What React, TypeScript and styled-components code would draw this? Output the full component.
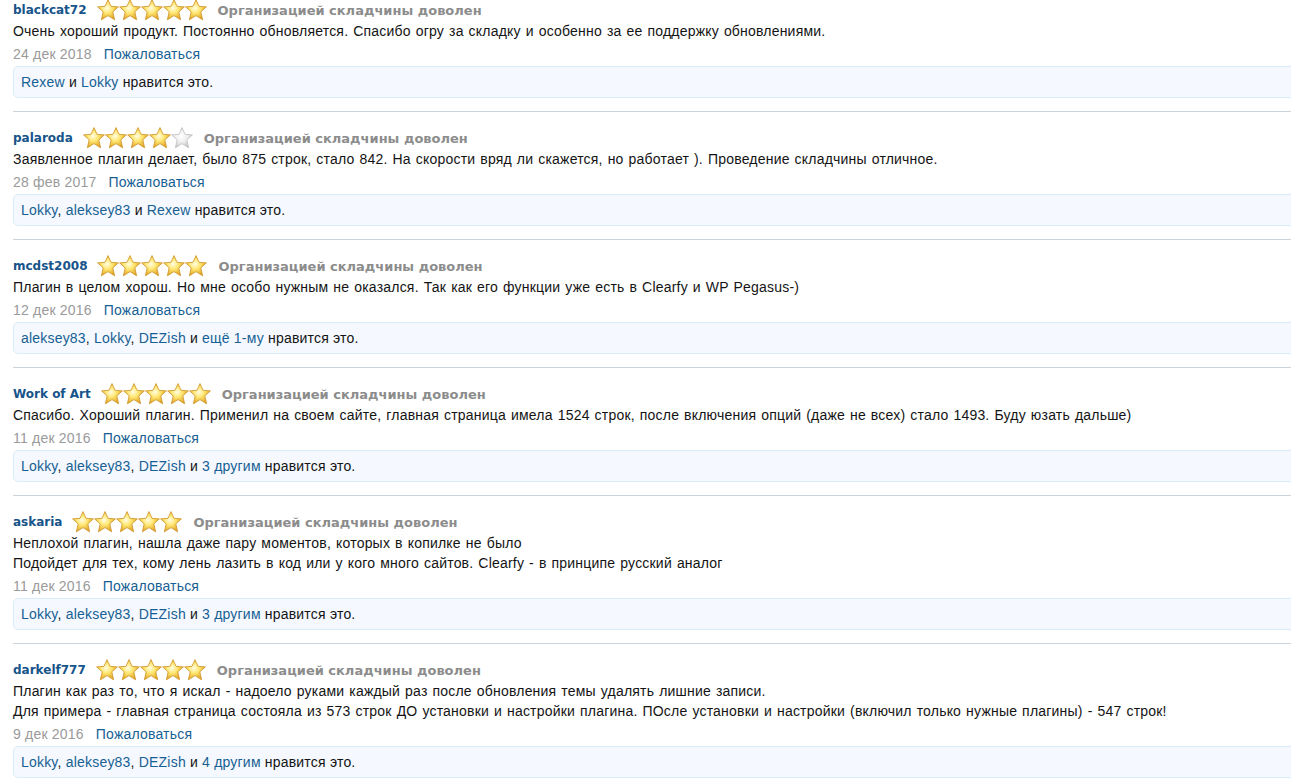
import React from "react";
import styled, { createGlobalStyle } from "styled-components";

const Global = createGlobalStyle`
  html, body { margin: 0; padding: 0; background: #fff; overflow: hidden; }
  body { font-family: "Liberation Sans", Arial, sans-serif; font-size: 14px; letter-spacing: 0.2px; color: #141414; }
`;

const List = styled.div`
  width: 1300px;
  padding-left: 13px;
`;

const Item = styled.div`
  padding: 16px 0 13px;
  border-top: 1px solid #cbd4dc;
  &:first-child { padding-top: 0; border-top: none; }
`;

const Header = styled.div`
  display: flex;
  align-items: center;
  height: 20px;
`;

const UserName = styled.a`
  font-family: "DejaVu Sans", Verdana, sans-serif;
  font-weight: bold;
  font-size: 12px;
  letter-spacing: 0;
  color: #16548a;
  text-decoration: none;
  margin-right: 10px;
`;

const Stars = styled.div`
  display: flex;
  margin-right: 11px;
`;

const Verdict = styled.span`
  font-family: "DejaVu Sans", Verdana, sans-serif;
  font-weight: bold;
  font-size: 13px;
  letter-spacing: 0;
  color: #8c8c8c;
`;

const Message = styled.div`
  margin-top: 1px;
  line-height: 20px;
  word-spacing: 0.9px;
`;

const Meta = styled.div`
  margin-top: 3px;
  line-height: 20px;
  display: flex;
  gap: 12px;
`;

const DateText = styled.span`
  color: #9a9a9a;
`;

const Link = styled.a`
  color: #176093;
  text-decoration: none;
`;

const LikeBox = styled.div`
  margin-top: 2px;
  height: 30px;
  line-height: 30px;
  padding: 0 7px;
  background: #f5f9ff;
  border: 1px solid #d7edfc;
  border-radius: 5px;
`;

const StarIcon: React.FC<{ filled: boolean; id: string }> = ({ filled, id }) => (
  <svg width="22" height="22" viewBox="0 0 22 22">
    <defs>
      <radialGradient id={id} cx="45%" cy="42%" r="62%">
        {filled ? (
          <>
            <stop offset="0%" stopColor="#fffce6" />
            <stop offset="40%" stopColor="#ffe873" />
            <stop offset="100%" stopColor="#dc9a18" />
          </>
        ) : (
          <>
            <stop offset="0%" stopColor="#ffffff" />
            <stop offset="50%" stopColor="#eeeeee" />
            <stop offset="100%" stopColor="#bdbdbd" />
          </>
        )}
      </radialGradient>
    </defs>
    <path
      d="M11 0.6 L14 7.3 L21.4 7.9 L15.8 12.8 L17.6 20.8 L11 16.6 L4.4 20.8 L6.2 12.8 L0.6 7.9 L8 7.3 Z"
      fill={`url(#${id})`}
      stroke={filled ? "#d39a32" : "#c4c4c4"}
      strokeWidth="0.9"
      strokeLinejoin="round"
    />
  </svg>
);

type Review = {
  user: string;
  rating: number;
  lines: string[];
  date: string;
  likers: string[];
  more?: string;
};

const reviews: Review[] = [
  {
    user: "blackcat72",
    rating: 5,
    lines: ["Очень хороший продукт. Постоянно обновляется. Спасибо огру за складку и особенно за ее поддержку обновлениями."],
    date: "24 дек 2018",
    likers: ["Rexew", "Lokky"],
  },
  {
    user: "palaroda",
    rating: 4,
    lines: ["Заявленное плагин делает, было 875 строк, стало 842. На скорости вряд ли скажется, но работает ). Проведение складчины отличное."],
    date: "28 фев 2017",
    likers: ["Lokky", "aleksey83", "Rexew"],
  },
  {
    user: "mcdst2008",
    rating: 5,
    lines: ["Плагин в целом хорош. Но мне особо нужным не оказался. Так как его функции уже есть в Clearfy и WP Pegasus-)"],
    date: "12 дек 2016",
    likers: ["aleksey83", "Lokky", "DEZish"],
    more: "ещё 1-му",
  },
  {
    user: "Work of Art",
    rating: 5,
    lines: ["Спасибо. Хороший плагин. Применил на своем сайте, главная страница имела 1524 строк, после включения опций (даже не всех) стало 1493. Буду юзать дальше)"],
    date: "11 дек 2016",
    likers: ["Lokky", "aleksey83", "DEZish"],
    more: "3 другим",
  },
  {
    user: "askaria",
    rating: 5,
    lines: [
      "Неплохой плагин, нашла даже пару моментов, которых в копилке не было",
      "Подойдет для тех, кому лень лазить в код или у кого много сайтов. Clearfy - в принципе русский аналог",
    ],
    date: "11 дек 2016",
    likers: ["Lokky", "aleksey83", "DEZish"],
    more: "3 другим",
  },
  {
    user: "darkelf777",
    rating: 5,
    lines: [
      "Плагин как раз то, что я искал - надоело руками каждый раз после обновления темы удалять лишние записи.",
      "Для примера - главная страница состояла из 573 строк ДО установки и настройки плагина. ПОсле установки и настройки (включил только нужные плагины) - 547 строк!",
    ],
    date: "9 дек 2016",
    likers: ["Lokky", "aleksey83", "DEZish"],
    more: "4 другим",
  },
];

const Likes: React.FC<{ r: Review }> = ({ r }) => {
  const names = r.more ? r.likers : r.likers.slice(0, -1);
  const last = r.more ? r.more : r.likers[r.likers.length - 1];
  return (
    <LikeBox>
      {names.map((n, i) => (
        <React.Fragment key={n}>
          {i > 0 && ", "}
          <Link href="#">{n}</Link>
        </React.Fragment>
      ))}
      {" и "}
      <Link href="#">{last}</Link>
      {" нравится это."}
    </LikeBox>
  );
};

export default function App() {
  return (
    <>
      <Global />
      <List>
        {reviews.map((r, idx) => (
          <Item key={r.user}>
            <Header>
              <UserName href="#">{r.user}</UserName>
              <Stars>
                {[0, 1, 2, 3, 4].map((s) => (
                  <StarIcon key={s} filled={s < r.rating} id={`st-${idx}-${s}`} />
                ))}
              </Stars>
              <Verdict>Организацией складчины доволен</Verdict>
            </Header>
            <Message>
              {r.lines.map((l, i) => (
                <div key={i}>{l}</div>
              ))}
            </Message>
            <Meta>
              <DateText>{r.date}</DateText>
              <Link href="#">Пожаловаться</Link>
            </Meta>
            <Likes r={r} />
          </Item>
        ))}
      </List>
    </>
  );
}
